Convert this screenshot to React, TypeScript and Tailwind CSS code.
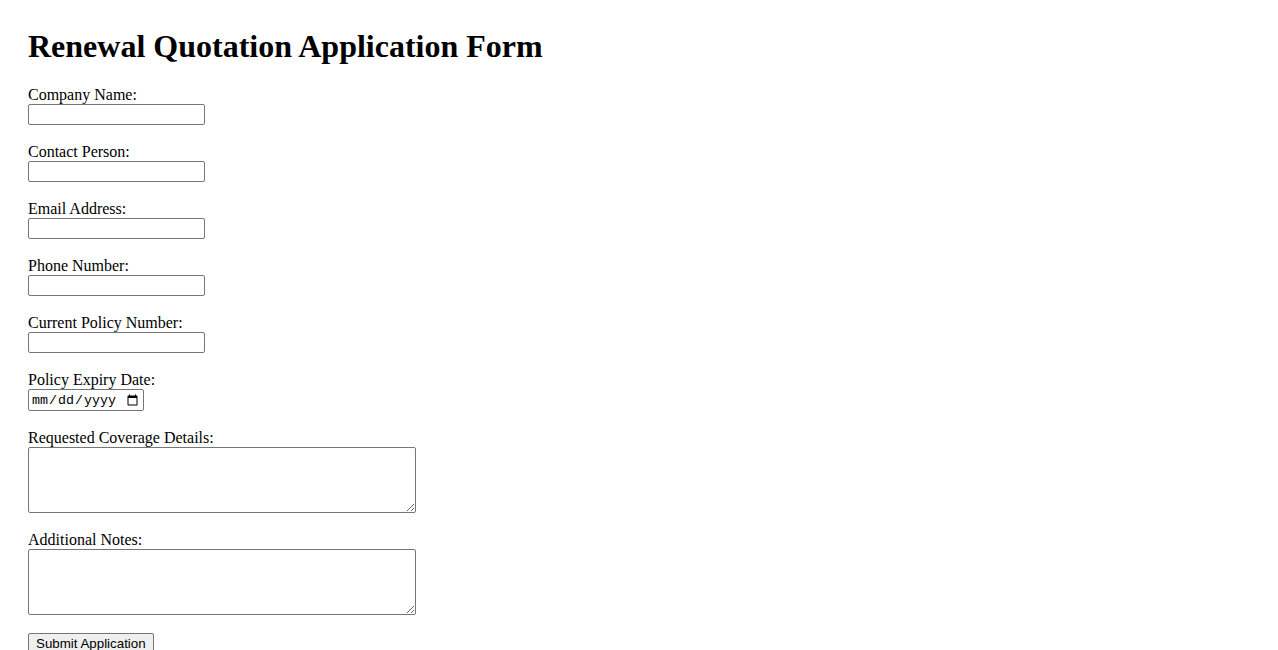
import React from "react";

const inputCls =
  "block w-[177px] h-[21px] border border-[#767676] rounded-[2px] bg-white px-[2px] py-[1px] text-[13.333px] font-['Liberation_Sans',Arial,sans-serif] text-black outline-none";

const labelCls = "block h-[18px] leading-[18px] text-[16px] text-black";

function Field({ label, children }: { label: string; children: React.ReactNode }) {
  return (
    <div className="mb-[18px]">
      <label className={labelCls}>{label}</label>
      {children}
    </div>
  );
}

export default function App() {
  return (
    <div className="min-h-[650px] bg-white px-[28px] pt-[28px] font-['Liberation_Serif','Times_New_Roman',serif] text-black">
      <h1 className="text-[32px] leading-[37px] font-bold mb-[21px]">Renewal Quotation Application Form</h1>
      <form onSubmit={(e) => e.preventDefault()}>
        <Field label="Company Name:">
          <input type="text" className={inputCls} />
        </Field>
        <Field label="Contact Person:">
          <input type="text" className={inputCls} />
        </Field>
        <Field label="Email Address:">
          <input type="email" className={inputCls} />
        </Field>
        <Field label="Phone Number:">
          <input type="tel" className={inputCls} />
        </Field>
        <Field label="Current Policy Number:">
          <input type="text" className={inputCls} />
        </Field>
        <Field label="Policy Expiry Date:">
          <input
            type="date"
            className="block w-[116px] h-[22px] border border-[#767676] rounded-[2px] bg-white pl-[2px] pr-[2px] pt-[2px] pb-0 text-[13.333px] font-['Liberation_Mono',monospace] text-black outline-none"
          />
        </Field>
        <Field label="Requested Coverage Details:">
          <textarea className="block w-[388px] h-[66px] border border-[#767676] rounded-[2px] bg-white p-[2px] text-[13.333px] font-['Liberation_Mono',monospace] outline-none" />
        </Field>
        <Field label="Additional Notes:">
          <textarea className="block w-[388px] h-[66px] border border-[#767676] rounded-[2px] bg-white p-[2px] text-[13.333px] font-['Liberation_Mono',monospace] outline-none" />
        </Field>
        <button
          type="submit"
          className="block h-[21px] border border-[#767676] rounded-[2px] bg-[#efefef] px-[7px] py-[1px] text-[13.333px] leading-[17px] font-['Liberation_Sans',Arial,sans-serif] text-black"
        >
          Submit Application
        </button>
      </form>
    </div>
  );
}
